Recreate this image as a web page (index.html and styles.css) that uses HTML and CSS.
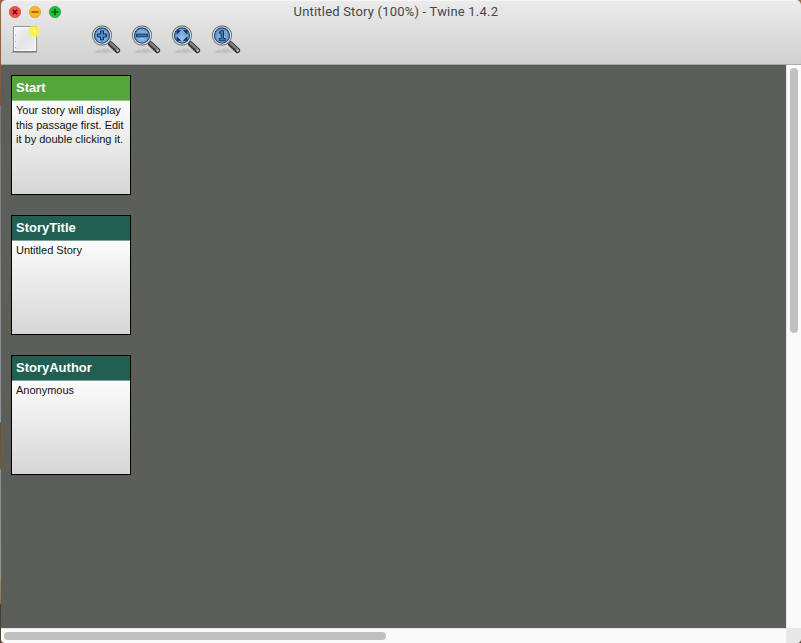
FILE: index.html
```
<!DOCTYPE html>
<html lang="en">
<head>
<meta charset="utf-8">
<title>Untitled Story (100%) - Twine 1.4.2</title>
<link rel="stylesheet" href="styles.css">
</head>
<body>
<svg class="defs" aria-hidden="true">
  <defs>
    <radialGradient id="glass" cx=".5" cy=".65" r=".6"><stop offset="0" stop-color="#9fc4ea"/><stop offset=".6" stop-color="#6fa2d8"/><stop offset="1" stop-color="#4478b5"/></radialGradient>
    <radialGradient id="glow"><stop offset="0" stop-color="#fffba0"/><stop offset=".3" stop-color="#fff34a"/><stop offset=".65" stop-color="#fbf03c" stop-opacity=".85"/><stop offset="1" stop-color="#fbf46a" stop-opacity="0"/></radialGradient>
    <linearGradient id="paper" x2="1" y2="1"><stop offset="0" stop-color="#f8f8f8"/><stop offset=".5" stop-color="#e4e4e4"/><stop offset="1" stop-color="#f3f3f3"/></linearGradient>
    <radialGradient id="shade"><stop offset="0" stop-color="#999" stop-opacity=".5"/><stop offset="1" stop-color="#999" stop-opacity="0"/></radialGradient>
    <g id="lens">
      <path d="M5 31l5-4 2 4z" fill="#aaa" opacity=".4"/>
      <ellipse cx="17" cy="29" rx="9" ry="3" fill="url(#shade)"/>
      <path d="M19.5 19.5l3 3" stroke="#666" stroke-width="3"/>
      <path d="M21.5 21.8l7 6.7" stroke="#333" stroke-width="5.2" stroke-linecap="round"/>
      <path d="M21.8 21.5l6.5 6.2" stroke="#858585" stroke-width="2.6" stroke-linecap="round"/>
      <path d="M22 23.5l6 5.5" stroke="#4c4c4c" stroke-width="1"/>
      <circle cx="28.7" cy="28.6" r="1.2" fill="#c7c7c7"/>
      <circle cx="13" cy="13.5" r="9.6" fill="#f4f4f2" stroke="#777976" stroke-width="1.1"/>
      <circle cx="13" cy="13.5" r="7.6" fill="url(#glass)" stroke="#244b79" stroke-width="1.1"/>
      <path d="M7 11.5a6.3 6.3 0 0 1 12 0q-6-2-12 0z" fill="#b5d2ef" opacity=".35"/>
    </g>
  </defs>
</svg>
<div class="window">
  <header class="chrome">
    <div class="titlebar">
      <div class="lights">
        <svg class="light" viewBox="0 0 12 12"><circle cx="6" cy="6" r="5.6" fill="#fc5150" stroke="#e23f3e" stroke-width=".8"/><path d="M3.8 3.8l4.4 4.4M8.2 3.8l-4.4 4.4" stroke="#6b0808" stroke-width="1.6"/></svg>
        <svg class="light" viewBox="0 0 12 12"><circle cx="6" cy="6" r="5.6" fill="#fdb42a" stroke="#e39d22" stroke-width=".8"/><path d="M2.5 6h7" stroke="#8b4f00" stroke-width="1.7"/></svg>
        <svg class="light" viewBox="0 0 12 12"><circle cx="6" cy="6" r="5.6" fill="#1fc33a" stroke="#17a52d" stroke-width=".8"/><path d="M2.7 6h6.6M6 2.7v6.6" stroke="#045a0b" stroke-width="1.7"/></svg>
      </div>
      <h1 class="title">Untitled Story (100%) - Twine 1.4.2</h1>
    </div>
    <nav class="toolbar">
      <svg class="tool new" viewBox="0 0 32 34"><path d="M2 31h26l-2-2H4z" fill="#888" opacity=".6"/><path d="M4.5 4.5h23v25h-23z" fill="url(#paper)" stroke="#929292"/><path d="M5.5 5.5h21v23h-21z" fill="none" stroke="#fff" stroke-opacity=".8"/><path d="M4 29.7h24" stroke="#777" stroke-width="1"/><path d="M6.5 13v1M6.5 19v1M6.5 25v1" stroke="#aaa"/><circle cx="25.2" cy="9.3" r="6.8" fill="url(#glow)"/></svg>
      <svg class="tool" viewBox="0 0 32 34"><use href="#lens"/><path d="M11.5 9h3v3h3v3h-3v3h-3v-3h-3v-3h3z" fill="#4d87c5" stroke="#102f55" stroke-width="1"/></svg>
      <svg class="tool" viewBox="0 0 32 34"><use href="#lens"/><path d="M7.5 12.2h11v2.6h-11z" fill="#3e70ab" stroke="#183b66" stroke-width="1"/></svg>
      <svg class="tool" viewBox="0 0 32 34"><use href="#lens"/><path d="M8 8.6h3.5L8 12zM18 8.6h-3.5L18 12zM8 18.5h3.5L8 15zM18 18.5h-3.5L18 15z" fill="#183554" stroke="#183554" stroke-width=".7"/></svg>
      <svg class="tool" viewBox="0 0 32 34"><use href="#lens"/><path d="M10.3 9.8l2-1.3h2.2v8h1.9v2.2h-6.3v-2.2h2v-5.3h-1.8z" fill="#4377b1" stroke="#15334f" stroke-width=".9"/></svg>
    </nav>
  </header>
  <main class="canvas">
    <article class="passage start"><h2>Start</h2><p>Your story will display<br>this passage first. Edit<br>it by double clicking it.</p></article>
    <article class="passage"><h2>StoryTitle</h2><p>Untitled Story</p></article>
    <article class="passage"><h2>StoryAuthor</h2><p>Anonymous</p></article>
  </main>
  <div class="vscroll"><div class="thumb"></div></div>
  <div class="hscroll"><div class="thumb"></div></div>
  <div class="corner"></div>
</div>
</body>
</html>
```
FILE: styles.css
```
* { box-sizing: border-box; }
body {
  margin: 0;
  height: 643px;
  padding-left: 1px;
  overflow: hidden;
  font-family: "Liberation Sans", Arial, sans-serif;
  background: linear-gradient(#9b6b47 0, #87542e 105px, #777b7b 106px, #8d979b 422px, #704a2c 423px, #80552f 468px, #8c918f 470px, #929795 578px, #a38a62 580px, #8d7350 603px, #44382f 605px, #594531 643px);
}
.defs { position: absolute; width: 0; height: 0; }
.window {
  display: grid;
  grid-template: 65px 563px 15px / 785px 15px;
  width: 800px;
  height: 643px;
  overflow: hidden;
  border-radius: 5px 5px 4px 4px;
}
.chrome {
  grid-column: 1 / 3;
  background: linear-gradient(#ebebeb, #d0d0d0);
  border-top: 1px solid #f6f6f6;
  border-bottom: 1px solid #a9a9a9;
}
.titlebar {
  display: grid;
  grid-template-columns: 1fr auto 1fr;
  align-items: center;
  height: 21px;
}
.lights { display: flex; gap: 8px; padding-left: 8px; }
.light { width: 12px; height: 12px; }
.title {
  margin: 0;
  width: 215px;
  font: 400 13px/20px Roboto, "Liberation Sans", sans-serif;
  letter-spacing: 0.2px;
  color: #464646;
  white-space: nowrap;
}
.toolbar { display: flex; gap: 8px; padding-left: 8px; }
.tool { width: 32px; height: 34px; }
.new { margin-right: 40px; }
.canvas {
  display: flex;
  flex-direction: column;
  gap: 20px;
  padding: 10px;
  background: #5c5f59;
}
.passage {
  width: 120px;
  height: 120px;
  border: 1px solid #000;
  background: linear-gradient(#fcfcfc 24px, #d6d6d6);
}
.passage h2 {
  margin: 0;
  height: 25px;
  padding-left: 4px;
  font-size: 13px;
  line-height: 24px;
  color: #fff;
  background: #205f51;
  border-bottom: 1px solid #7ba298;
}
.passage.start h2 { background: #52a63b; border-color: #92c685; }
.passage p {
  margin: 2px 0 0 4px;
  font-size: 11px;
  line-height: 14.5px;
  color: #111;
  white-space: nowrap;
}
.vscroll {
  padding: 3px 3px 0 4px;
  background: #fafafa;
  border-left: 1px solid #e6e6e6;
}
.vscroll .thumb { height: 265px; width: 8px; margin-left: -1px; border-radius: 4px; background: #c0c0c0; }
.hscroll {
  padding: 3px 0 0 3px;
  background: #fafafa;
  border-top: 1px solid #e6e6e6;
}
.hscroll .thumb { width: 382px; height: 8px; border-radius: 4px; background: #c0c0c0; }
.corner { background: #e8e8e8; }
```
